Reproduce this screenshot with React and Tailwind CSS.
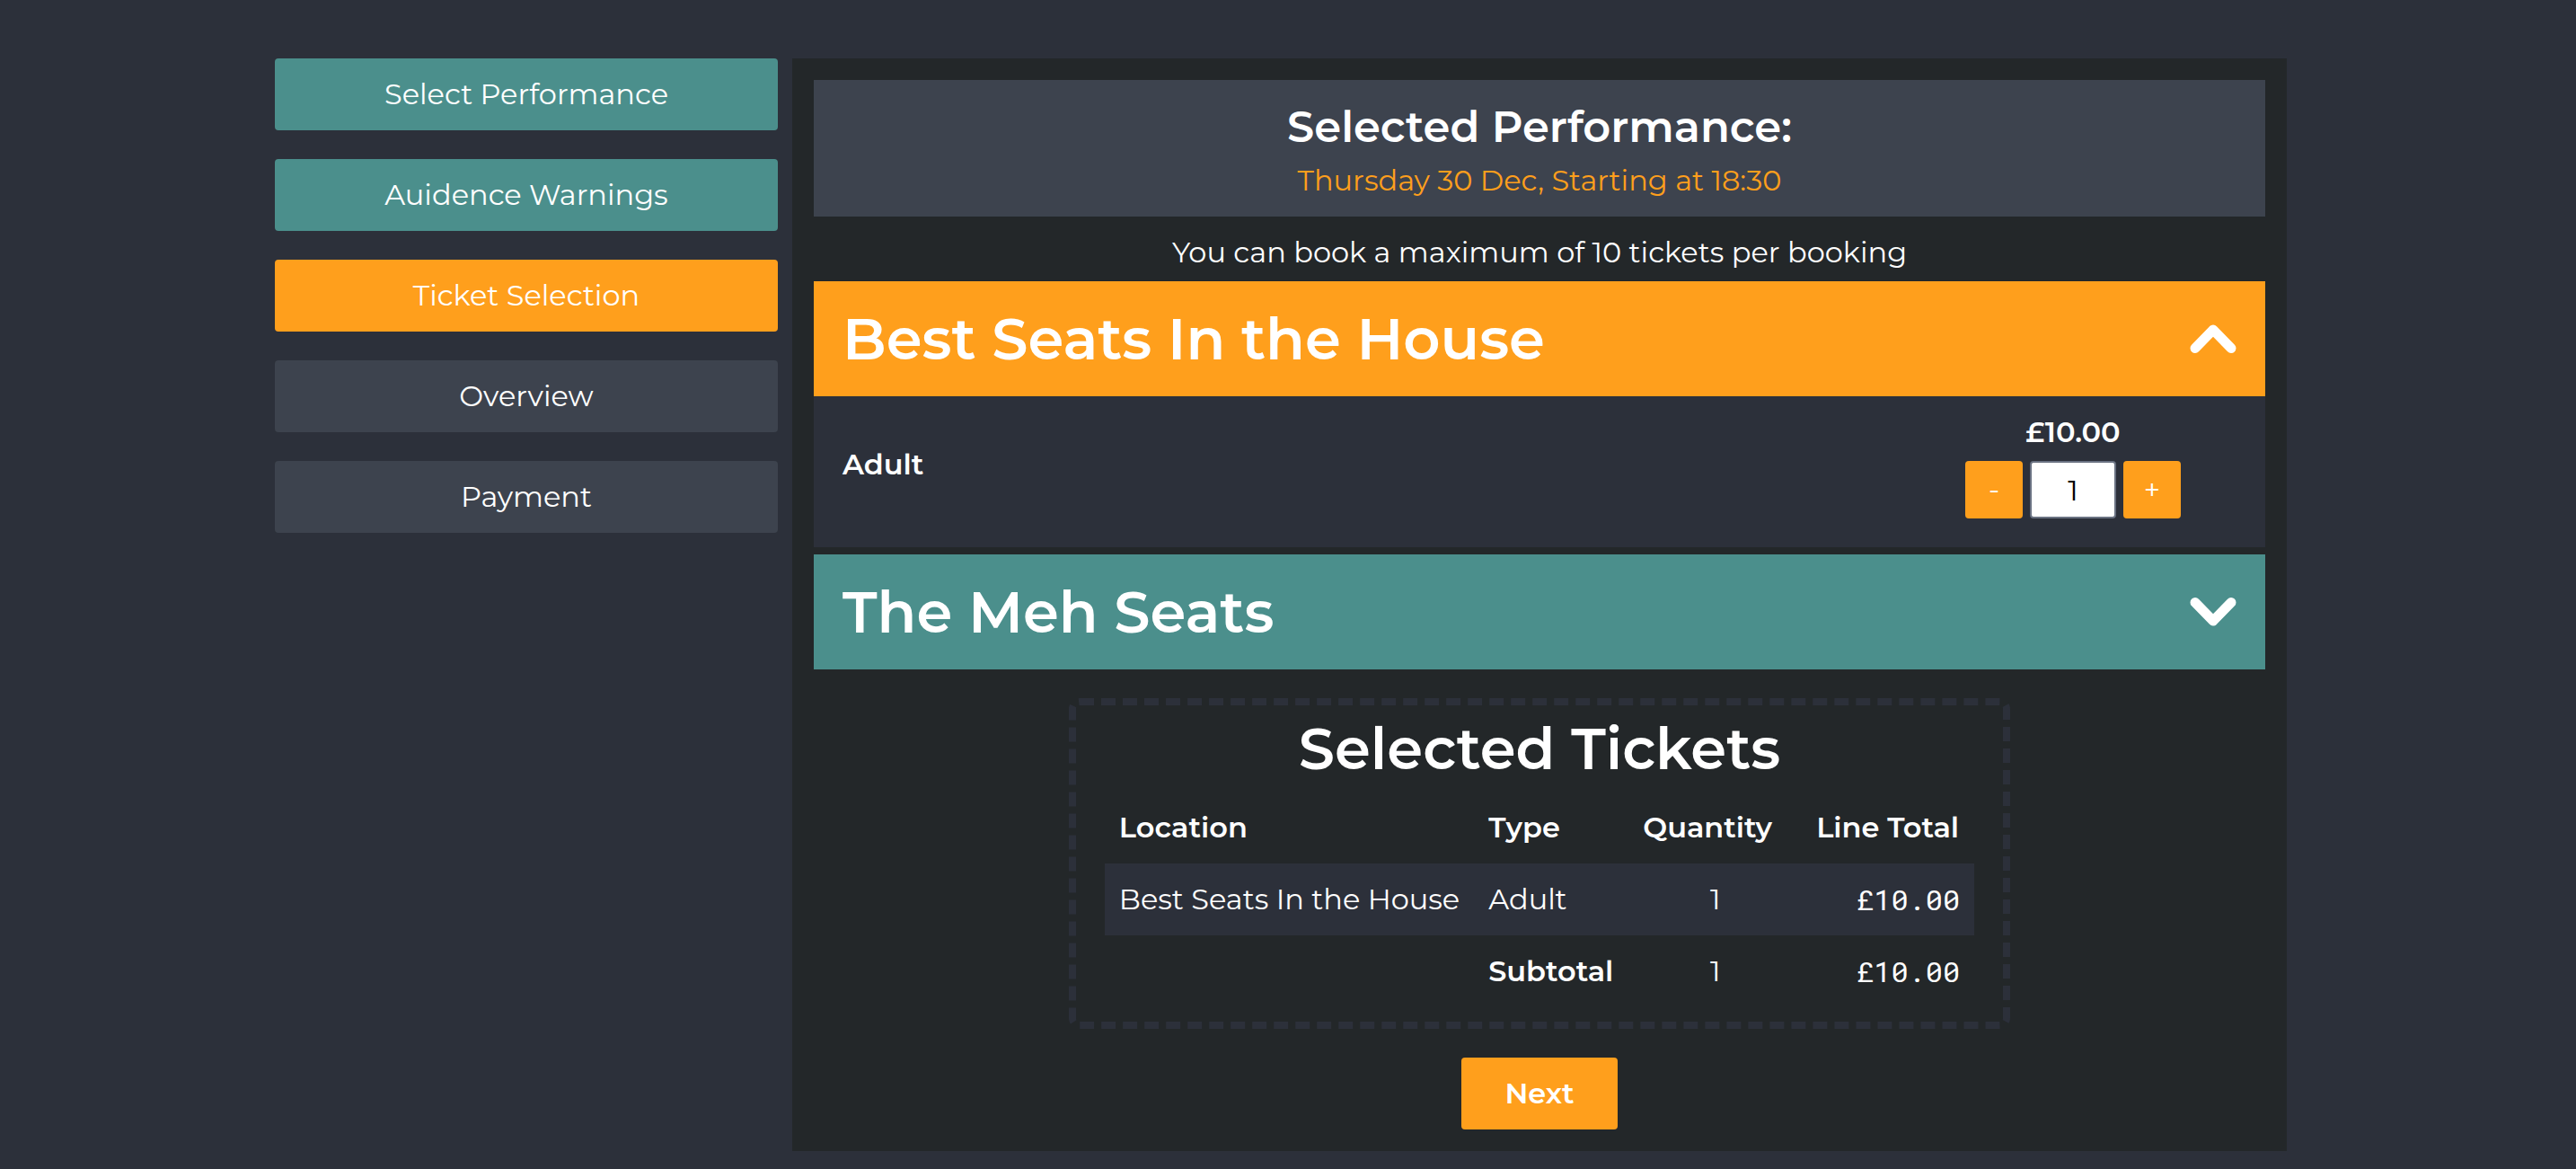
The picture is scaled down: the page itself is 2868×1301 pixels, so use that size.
import React, { useState } from "react";

const steps = [
  { label: "Select Performance", tone: "bg-[#4b8f8c]" },
  { label: "Auidence Warnings", tone: "bg-[#4b8f8c]" },
  { label: "Ticket Selection", tone: "bg-[#ff9f1c]" },
  { label: "Overview", tone: "bg-[#3d434e]" },
  { label: "Payment", tone: "bg-[#3d434e]" },
];

function Chevron({ up }) {
  return (
    <svg
      viewBox="0 0 52 32"
      className={up ? "h-8 w-[52px] rotate-180" : "h-8 w-[52px]"}
      fill="none"
      stroke="currentColor"
      strokeWidth="11"
      strokeLinecap="round"
      strokeLinejoin="round"
      aria-hidden="true"
    >
      <path d="M6 5.5 26 26 46 5.5" />
    </svg>
  );
}

function SectionHeader({ title, open, onToggle }) {
  return (
    <button
      type="button"
      aria-expanded={open}
      onClick={onToggle}
      className={
        (open ? "bg-[#ff9f1c]" : "bg-[#4b8f8c]") +
        " flex w-full items-center justify-between px-8 py-4 text-left text-[64px] leading-24 font-semibold"
      }
    >
      {title}
      <Chevron up={open} />
    </button>
  );
}

function Stepper({ value, onChange }) {
  const button = "size-16 rounded bg-[#ff9f1c]";
  return (
    <div className="flex gap-2">
      <button type="button" aria-label="Remove one" className={button} onClick={() => onChange(Math.max(0, value - 1))}>
        -
      </button>
      <input
        type="text"
        aria-label="Adult tickets"
        value={value}
        onChange={(e) => onChange(Math.min(10, Number(e.target.value) || 0))}
        className="h-16 w-24 rounded border-2 border-gray-500 bg-white text-center text-black"
      />
      <button type="button" aria-label="Add one" className={button} onClick={() => onChange(Math.min(10, value + 1))}>
        +
      </button>
    </div>
  );
}

export default function App() {
  const [quantity, setQuantity] = useState(1);
  const [open, setOpen] = useState("best");
  const toggle = (id) => setOpen(open === id ? null : id);
  const total = "£" + (quantity * 10).toFixed(2);

  return (
    <div className="min-h-screen bg-[#2c303a] pt-[65px] pr-4 pb-5 font-[Montserrat,Inter,sans-serif] text-[32px] leading-12 text-white">
      <div className="mx-auto flex max-w-[2240px] items-start gap-4">
        <nav className="flex w-1/4 shrink-0 flex-col gap-8">
          {steps.map((s) => (
            <button key={s.label} type="button" className={s.tone + " rounded py-4"}>
              {s.label}
            </button>
          ))}
        </nav>

        <main className="flex grow flex-col bg-[#232729] p-6">
          <section className="bg-[#3d434e] py-4 text-center">
            <h3 className="text-5xl leading-18 font-semibold">Selected Performance:</h3>
            <p className="text-[#ff9f1c]">Thursday 30 Dec, Starting at 18:30</p>
          </section>

          <p className="mt-4 mb-2 text-center">You can book a maximum of 10 tickets per booking</p>

          <SectionHeader title="Best Seats In the House" open={open === "best"} onToggle={() => toggle("best")} />
          {open === "best" && (
            <div className="flex items-center justify-between bg-[#2c303a] pt-4 pr-[94px] pb-8 pl-8">
              <span className="font-semibold">Adult</span>
              <div className="flex flex-col items-center gap-2">
                <span className="font-semibold">£10.00</span>
                <Stepper value={quantity} onChange={setQuantity} />
              </div>
            </div>
          )}
          <div className="mt-2">
            <SectionHeader title="The Meh Seats" open={open === "meh"} onToggle={() => toggle("meh")} />
          </div>

          <section className="mt-8 flex flex-col items-center self-center rounded-xl border-8 border-dashed border-[#2c303a] px-8 pb-4">
            <h2 className="text-[64px] leading-24 font-semibold">Selected Tickets</h2>
            <table className="whitespace-nowrap">
              <thead>
                <tr>
                  <th className="w-[411px] p-4 text-left font-semibold">Location</th>
                  <th className="w-[172px] p-4 text-left font-semibold">Type</th>
                  <th className="w-[193px] p-4 text-left font-semibold">Quantity</th>
                  <th className="w-[192px] p-4 text-left font-semibold">Line Total</th>
                </tr>
              </thead>
              <tbody>
                <tr className="bg-[#2c303a]">
                  <td className="p-4">Best Seats In the House</td>
                  <td className="p-4">Adult</td>
                  <td className="p-4 text-center">{quantity}</td>
                  <td className="p-4 text-right font-['Roboto_Mono','Liberation_Mono',monospace]">{total}</td>
                </tr>
                <tr>
                  <td className="p-4" />
                  <th scope="row" className="p-4 text-left font-semibold">Subtotal</th>
                  <td className="p-4 text-center">{quantity}</td>
                  <td className="p-4 text-right font-['Roboto_Mono','Liberation_Mono',monospace]">{total}</td>
                </tr>
              </tbody>
            </table>
          </section>

          <button type="button" className="mt-8 self-center rounded bg-[#ff9f1c] px-12 py-4 font-semibold">
            Next
          </button>
        </main>
      </div>
    </div>
  );
}
